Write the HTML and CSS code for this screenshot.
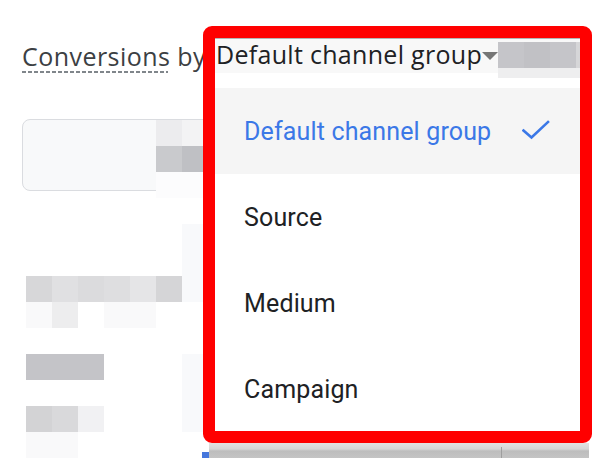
FILE: index.html
```html
<!DOCTYPE html>
<html>
<head>
<meta charset="utf-8">
<link rel="stylesheet" href="styles.css">
</head>
<body>
<div class="page">
  <h2 class="title"><span class="dashed">Conversions</span> by</h2>
  <div class="card"></div>
</div>

<div class="mosaic">
  <i></i><i></i><i></i><i></i><i></i><i class="m-e"></i><i class="m-f"></i>
  <i></i><i></i><i></i><i></i><i></i><i class="m-c"></i><i class="m-b"></i>
  <i></i><i></i><i></i><i></i><i></i><i class="m-w"></i><i class="m-w"></i>
  <i></i><i></i><i></i><i></i><i></i><i></i><i></i>
  <i></i><i></i><i></i><i></i><i></i><i></i><i class="m-p"></i>
  <i></i><i></i><i></i><i></i><i></i><i></i><i class="m-p"></i>
  <i class="m-d1"></i><i class="m-d2"></i><i class="m-d3"></i><i class="m-d4"></i><i class="m-d5"></i><i class="m-d6"></i><i class="m-p"></i>
  <i class="m-l1"></i><i class="m-l2"></i><i></i><i class="m-l1"></i><i class="m-l1"></i><i></i><i></i>
  <i></i><i></i><i></i><i></i><i></i><i></i><i></i>
  <i class="m-g"></i><i class="m-g"></i><i class="m-g"></i><i></i><i></i><i></i><i class="m-p"></i>
  <i></i><i></i><i></i><i></i><i></i><i></i><i class="m-p"></i>
  <i class="m-h1"></i><i class="m-h2"></i><i class="m-h3"></i><i></i><i></i><i></i><i class="m-p"></i>
  <i class="m-l1"></i><i class="m-l1"></i><i></i><i></i><i></i><i></i><i></i>
</div>

<div class="shadow-band"><span class="shadow-divider"></span></div>
<div class="blue-dot"></div>

<div class="menu-frame">
  <div class="menu-head">
    <span class="head-text">Default channel group</span>
    <span class="caret"></span>
    <div class="head-mosaic">
      <i class="h1"></i><i class="h2"></i><i class="h1"></i><i class="h3"></i>
      <i class="hl"></i><i class="hl"></i><i class="hl"></i><i class="hl"></i>
    </div>
  </div>
  <div class="head-gap"></div>
  <ul class="menu">
    <li class="item selected">
      <span>Default channel group</span>
      <svg class="check" width="28" height="20" viewBox="0 0 28 20"><path d="M1.5 10.5 L9.5 17.5 L26 2" fill="none" stroke="#3b78e7" stroke-width="2.6" stroke-linecap="square"/></svg>
    </li>
    <li class="item"><span>Source</span></li>
    <li class="item"><span>Medium</span></li>
    <li class="item"><span>Campaign</span></li>
  </ul>
</div>
</body>
</html>
```

FILE: styles.css
```css
html, body {
  margin: 0;
  padding: 0;
  background: #ffffff;
  width: 597px;
  height: 458px;
  overflow: hidden;
  position: relative;
}

.page {
  padding: 40px 0 0 22px;
}

.title {
  margin: 0;
  font-family: "Open Sans", "Roboto", sans-serif;
  font-weight: 400;
  font-size: 25px;
  letter-spacing: 0.45px;
  line-height: 32px;
  color: #3c4043;
  white-space: nowrap;
}

.dashed {
  background-image: repeating-linear-gradient(to right, #80868b 0 4px, transparent 4px 6px);
  background-repeat: no-repeat;
  background-position: left bottom;
  background-size: calc(100% - 2px) 2px;
}

.card {
  margin-top: 47px;
  width: 420px;
  height: 70px;
  border: 1px solid #dadce0;
  border-radius: 8px;
  background: #f8f9fa;
}

/* redaction mosaic overlay */
.mosaic {
  position: absolute;
  left: 26px;
  top: 120px;
  display: grid;
  grid-template-columns: repeat(7, 26px);
  grid-template-rows: repeat(13, 26px);
}
.mosaic i { display: block; }
.m-e { background: #ececee; }
.m-f { background: #f3f3f4; }
.m-c { background: #c9cacd; }
.m-b { background: #bfc0c4; }
.m-w { background: #fcfcfd; }
.m-p { background: #f8f9fb; }
.m-d1 { background: #d7d7d9; }
.m-d2 { background: #e0e0e2; }
.m-d3 { background: #dbdbdd; }
.m-d4 { background: #dedee0; }
.m-d5 { background: #e5e5e7; }
.m-d6 { background: #d5d5d7; }
.m-l1 { background: #f9f9fa; }
.m-l2 { background: #ededee; }
.m-g { background: #c4c4c8; }
.m-h1 { background: #d3d3d5; }
.m-h2 { background: #d9d9db; }
.m-h3 { background: #f1f1f3; }

.shadow-band {
  position: absolute;
  left: 209px;
  top: 443px;
  width: 380px;
  height: 15px;
  background: linear-gradient(#e3e3e3 0, #d6d6d6 6px, #bdbdbd 8px, #c4c4c4 15px);
}
.shadow-divider {
  position: absolute;
  left: 292px;
  top: 4px;
  width: 1px;
  height: 11px;
  background: #9e9e9e;
}
.blue-dot {
  position: absolute;
  left: 202px;
  top: 452px;
  width: 7px;
  height: 6px;
  background: #4677dc;
}

/* highlighted menu */
.menu-frame {
  position: absolute;
  left: 203px;
  top: 26px;
  width: 365px;
  height: 393px;
  border: 12px solid #ff0000;
  border-radius: 9px;
  background: #ffffff;
  display: flex;
  flex-direction: column;
  overflow: hidden;
}

.menu-head {
  flex: none;
  height: 34px;
  border-top: 1px solid #b4b4b4;
  background: #f8f8f8;
  display: flex;
  align-items: flex-start;
  padding-left: 1px;
  position: relative;
  z-index: 1;
}

.head-text {
  font-family: "Open Sans", "Roboto", sans-serif;
  font-size: 25px;
  letter-spacing: 0.3px;
  line-height: 30px;
  color: #202124;
  white-space: nowrap;
}

.caret {
  flex: none;
  width: 0;
  height: 0;
  margin-top: 13px;
  margin-left: 0;
  border-left: 8px solid transparent;
  border-right: 8px solid transparent;
  border-top: 8px solid #767676;
}

.head-mosaic {
  flex: none;
  margin-top: 3px;
  display: grid;
  grid-template-columns: 26px 26px 26px 8px;
  grid-template-rows: 26px 10px;
}
.head-mosaic i { display: block; }
.h1 { background: #c5c5c9; }
.h2 { background: #c1c1c5; }
.h3 { background: #d6d6d8; }
.hl { background: #eeeeef; }

.head-gap {
  flex: none;
  height: 15px;
}

.menu {
  list-style: none;
  margin: 0;
  padding: 0;
  flex: 1;
}

.item {
  height: 86px;
  display: flex;
  align-items: center;
  justify-content: space-between;
  padding: 0 30px 0 29px;
  font-family: "Roboto", "Liberation Sans", sans-serif;
  font-size: 25px;
  letter-spacing: 0.15px;
  color: #202124;
  white-space: nowrap;
}

.item.selected {
  background: #f5f5f5;
  color: #3b78e7;
}

.check {
  display: block;
  margin-top: -2px;
}
```
